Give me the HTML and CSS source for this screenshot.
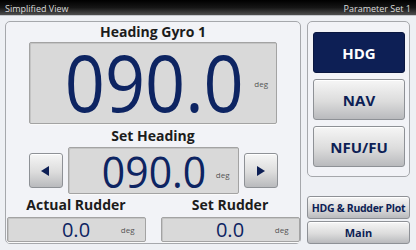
FILE: index.html
```html
<!DOCTYPE html>
<html lang="en">
<head>
    <meta charset="UTF-8">
    <meta name="viewport" content="width=device-width, initial-scale=1.0">
    <title>Simplified View</title>
    <link rel="stylesheet" href="styles.css">
</head>
<body>
    <div class="topbar">
        <span>Simplified View</span>
        <span>Parameter Set 1</span>
    </div>

    <div class="main">
        <div class="panel left">
            <div class="label title">Heading Gyro 1</div>
            <div class="readout big">
                <span class="value">090.0</span>
                <span class="unit">deg</span>
            </div>

            <div class="label sub">Set Heading</div>
            <div class="set-row">
                <div class="btn arrow">
                    <svg width="9" height="10" viewBox="0 0 9 10"><polygon points="8,0 8,10 0,5" fill="#0d1f55"/></svg>
                </div>
                <div class="readout mid">
                    <span class="value">090.0</span>
                    <span class="unit">deg</span>
                </div>
                <div class="btn arrow">
                    <svg width="9" height="10" viewBox="0 0 9 10"><polygon points="1,0 1,10 9,5" fill="#0d1f55"/></svg>
                </div>
            </div>

            <div class="rudders">
                <div class="rudder">
                    <div class="label small">Actual Rudder</div>
                    <div class="readout small-box">
                        <span class="value">0.0</span>
                        <span class="unit">deg</span>
                    </div>
                </div>
                <div class="rudder">
                    <div class="label small">Set Rudder</div>
                    <div class="readout small-box">
                        <span class="value">0.0</span>
                        <span class="unit">deg</span>
                    </div>
                </div>
            </div>
        </div>

        <div class="side">
            <div class="panel modes">
                <div class="btn mode active">HDG</div>
                <div class="btn mode">NAV</div>
                <div class="btn mode">NFU/FU</div>
            </div>
            <div class="links">
                <div class="btn link plot">HDG &amp; Rudder Plot</div>
                <div class="btn link">Main</div>
            </div>
        </div>
    </div>
</body>
</html>
```

FILE: styles.css
```css
body, html {
    margin: 0;
    padding: 0;
    font-family: "Open Sans", "Noto Sans", sans-serif;
    background: #eef0f4;
    width: 416px;
    height: 250px;
    overflow: hidden;
}

.topbar {
    height: 16px;
    display: flex;
    justify-content: space-between;
    align-items: center;
    padding: 1px 5px 0 5px;
    box-sizing: border-box;
    font-size: 9px;
    color: #dcdcdc;
    background: linear-gradient(#000 0%, #151515 50%, #4e4e4e 100%);
    border-bottom: 1px solid #c4c7cc;
}

.main {
    display: flex;
    gap: 6px;
    padding: 5px 6px 0 5px;
}

.panel {
    border: 1px solid #a6a8ac;
    border-radius: 5px;
    background: #f2f3f7;
    box-sizing: border-box;
}

.left {
    width: 296px;
    height: 223px;
    display: flex;
    flex-direction: column;
    align-items: center;
    padding-top: 1px;
}

.label {
    font-weight: 700;
    color: #1c1c1c;
    text-align: center;
}

.title {
    font-size: 14px;
    line-height: 18px;
    margin-bottom: 1px;
}

.sub {
    font-size: 14px;
    line-height: 17px;
    margin-top: 3px;
}

.readout {
    display: grid;
    grid-template-columns: 1fr auto 1fr;
    align-items: center;
    box-sizing: border-box;
    background: #d9d9d9;
    border: 1px solid #a3a3a3;
    border-radius: 2px;
    box-shadow: inset 1px 1px 0 #c4c4c4, 0 1px 0 #fafafa;
    color: #0d2462;
}

.readout .value {
    grid-column: 2;
}

.readout .unit {
    grid-column: 3;
    justify-self: end;
    font-size: 8px;
    color: #555;
}

.big {
    width: 248px;
    height: 82px;
}

.big .value {
    display: inline-block;
    font-size: 78px;
    line-height: 78px;
    margin-bottom: 5px;
    padding-left: 4px;
    transform: scaleX(0.9);
}

.big .unit {
    padding-right: 8px;
    margin-bottom: 2px;
}

.set-row {
    display: flex;
    align-items: center;
    gap: 5px;
    margin-top: 3px;
}

.btn {
    box-sizing: border-box;
    display: flex;
    align-items: center;
    justify-content: center;
    border: 1px solid #8e9196;
    border-radius: 3px;
    background: linear-gradient(#f6f6f6 0%, #dcdcdc 55%, #b9babd 100%);
    box-shadow: inset 0 1px 0 #fff;
    color: #0d1f55;
    font-weight: 700;
    white-space: nowrap;
}

.arrow {
    width: 34px;
    height: 35px;
}

.mid {
    width: 171px;
    height: 47px;
}

.mid .value {
    display: inline-block;
    font-size: 44px;
    line-height: 44px;
    padding-left: 2px;
    transform: scaleX(0.93);
}

.mid .unit {
    padding-right: 8px;
    margin-top: 8px;
}

.rudders {
    display: flex;
    gap: 15px;
    margin-top: 1px;
}

.rudder {
    display: flex;
    flex-direction: column;
    align-items: center;
}

.small {
    font-size: 14px;
    line-height: 19px;
    margin-bottom: 3px;
}

.small-box {
    width: 139px;
    height: 25px;
}

.small-box .value {
    font-size: 20px;
    line-height: 22px;
}

.small-box .unit {
    padding-right: 10px;
}

.side {
    display: flex;
    flex-direction: column;
    width: 103px;
}

.modes {
    height: 156px;
    display: flex;
    flex-direction: column;
    gap: 6px;
    padding: 10px 4px 0 5px;
}

.mode {
    height: 41px;
    font-size: 15px;
}

.mode.active {
    background: #0d1f55;
    border-color: #0a1740;
    box-shadow: none;
    color: #fff;
}

.links {
    display: flex;
    flex-direction: column;
    gap: 2px;
    margin-top: 19px;
}

.link {
    height: 23px;
    font-size: 11px;
}

.plot {
    font-size: 10.5px;
    letter-spacing: -0.3px;
}
```
